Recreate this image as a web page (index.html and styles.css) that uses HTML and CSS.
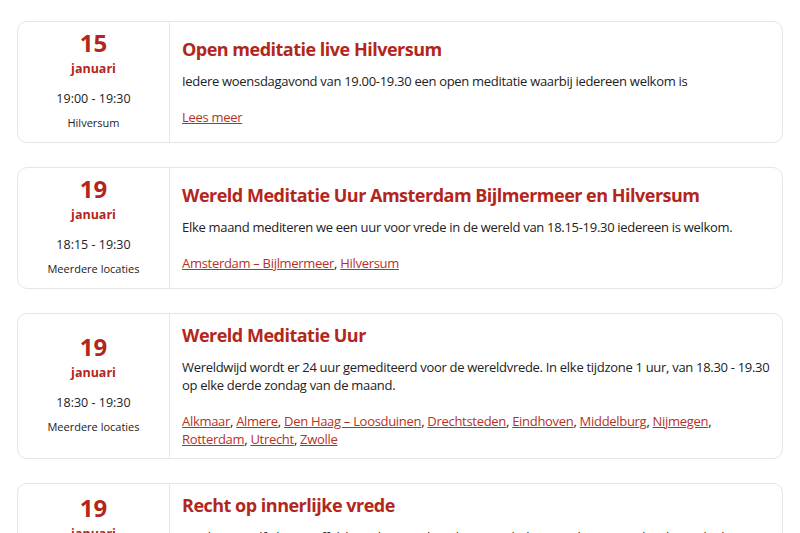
FILE: index.html
```html
<!DOCTYPE html>
<html lang="nl">
<head>
    <meta charset="UTF-8">
    <meta name="viewport" content="width=device-width, initial-scale=1.0">
    <title>Agenda</title>
    <link rel="stylesheet" href="styles.css">
</head>
<body>
<div class="events">
    <div class="event">
        <div class="event-date">
            <div class="day">15</div>
            <div class="month">januari</div>
            <div class="time">19:00 - 19:30</div>
            <div class="place">Hilversum</div>
        </div>
        <div class="event-body">
            <h2>Open meditatie live Hilversum</h2>
            <p>Iedere woensdagavond van 19.00-19.30 een open meditatie waarbij iedereen welkom is</p>
            <div class="links"><a href="#">Lees meer</a></div>
        </div>
    </div>

    <div class="event">
        <div class="event-date">
            <div class="day">19</div>
            <div class="month">januari</div>
            <div class="time">18:15 - 19:30</div>
            <div class="place">Meerdere locaties</div>
        </div>
        <div class="event-body">
            <h2>Wereld Meditatie Uur Amsterdam Bijlmermeer en Hilversum</h2>
            <p>Elke maand mediteren we een uur voor vrede in de wereld van 18.15-19.30 iedereen is welkom.</p>
            <div class="links"><a href="#">Amsterdam – Bijlmermeer</a>, <a href="#">Hilversum</a></div>
        </div>
    </div>

    <div class="event">
        <div class="event-date">
            <div class="day">19</div>
            <div class="month">januari</div>
            <div class="time">18:30 - 19:30</div>
            <div class="place">Meerdere locaties</div>
        </div>
        <div class="event-body">
            <h2>Wereld Meditatie Uur</h2>
            <p>Wereldwijd wordt er 24 uur gemediteerd voor de wereldvrede. In elke tijdzone 1 uur, van 18.30 - 19.30 op elke derde zondag van de maand.</p>
            <div class="links"><a href="#">Alkmaar</a>, <a href="#">Almere</a>, <a href="#">Den Haag – Loosduinen</a>, <a href="#">Drechtsteden</a>, <a href="#">Eindhoven</a>, <a href="#">Middelburg</a>, <a href="#">Nijmegen</a>, <a href="#">Rotterdam</a>, <a href="#">Utrecht</a>, <a href="#">Zwolle</a></div>
        </div>
    </div>

    <div class="event">
        <div class="event-date">
            <div class="day">19</div>
            <div class="month">januari</div>
            <div class="time">14:00 - 16:00</div>
            <div class="place">Amsterdam</div>
        </div>
        <div class="event-body">
            <h2>Recht op innerlijke vrede</h2>
            <p>Inzicht in jezelf als onstoffelijke ziel en inzicht in het grote belang van bewust anders leren denken, voelen en handelen.</p>
            <div class="links"><a href="#">Lees meer</a></div>
        </div>
    </div>
</div>
</body>
</html>
```

FILE: styles.css
```css
* {
    margin: 0;
    padding: 0;
    box-sizing: border-box;
}

body {
    font-family: 'Open Sans', 'Liberation Sans', sans-serif;
    color: #222;
    background: #fff;
}

.events {
    display: flex;
    flex-direction: column;
    gap: 24px;
    padding: 21px 17px;
}

.event {
    display: grid;
    grid-template-columns: 152px 1fr;
    border: 1px solid #e6e6e6;
    border-radius: 10px;
    background: #fff;
}

.event-date {
    display: flex;
    flex-direction: column;
    justify-content: center;
    align-items: center;
    padding: 8px 8px 10px;
    border-right: 1px solid #e6e6e6;
    text-align: center;
}

.day {
    font-size: 24px;
    line-height: 26px;
    font-weight: 700;
    color: #b3261b;
}

.month {
    margin-top: 4px;
    font-size: 12.5px;
    line-height: 18px;
    font-weight: 700;
    color: #b3261b;
}

.time {
    margin-top: 12px;
    font-size: 12.5px;
    line-height: 18px;
}

.place {
    margin-top: 6px;
    font-size: 11px;
    line-height: 18px;
}

.event-body {
    display: flex;
    flex-direction: column;
    justify-content: center;
    padding: 10px 10px 10px 12px;
}

.event-body h2 {
    font-size: 18px;
    line-height: 22px;
    font-weight: 700;
    letter-spacing: -0.5px;
    color: #b3261b;
}

.event-body p {
    margin-top: 12px;
    font-size: 13px;
    line-height: 18px;
    letter-spacing: -0.3px;
}

.links {
    margin-top: 18px;
    font-size: 13px;
    line-height: 18px;
    letter-spacing: -0.3px;
}

.links a {
    color: #b8311f;
    text-decoration: underline;
}
```
